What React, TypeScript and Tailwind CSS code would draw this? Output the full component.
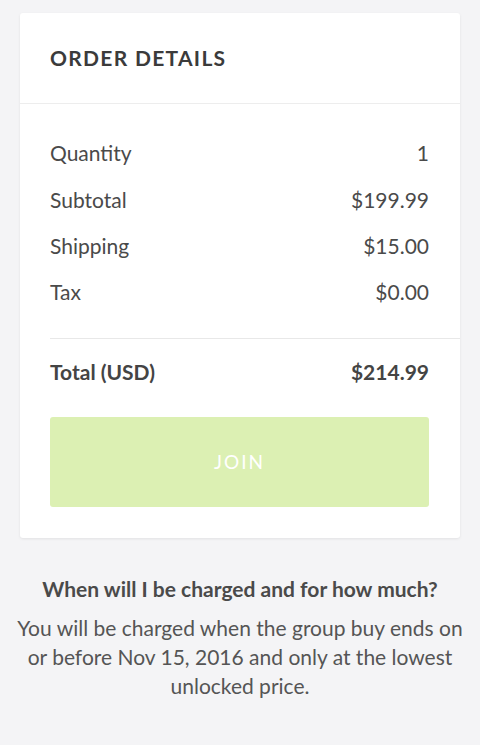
export default function App() {
  const rows = [
    ["Quantity", "1"],
    ["Subtotal", "$199.99"],
    ["Shipping", "$15.00"],
    ["Tax", "$0.00"],
  ];
  return (
    <div className="min-h-[745px] w-[480px] bg-[#f4f4f6] pt-[13px] text-[#4a4a4a]" style={{ fontFamily: "Lato, 'Open Sans', sans-serif" }}>
      <div className="mx-[20px] rounded-[3px] bg-white shadow-[0_1px_3px_rgba(0,0,0,0.08)]">
        <div className="flex h-[91px] items-center border-b border-[#ededed] px-[30px]">
          <h2 className="text-[21px] font-bold tracking-[1.3px] text-[#3b3b3b]">ORDER DETAILS</h2>
        </div>
        <div className="pt-[26px]">
          {rows.map(([k, v]) => (
            <div key={k} className="ml-[30px] mr-[31px] flex h-[46.3px] items-center justify-between text-[21px]">
              <span>{k}</span>
              <span>{v}</span>
            </div>
          ))}
          <div className="mt-[23px] ml-[30px] border-t border-[#e8e8e8]" />
          <div className="ml-[30px] mr-[31px] mt-[10px] flex h-[46px] items-center justify-between text-[21px] font-bold text-[#444]">
            <span>Total (USD)</span>
            <span>$214.99</span>
          </div>
          <div className="ml-[30px] mr-[31px] mt-[22px] flex h-[90px] items-center justify-center rounded-[3px] bg-[#dcf0b3] text-[19px] tracking-[2px] text-white">
            JOIN
          </div>
          <div className="h-[31px]" />
        </div>
      </div>
      <div className="mt-[36px] px-[16px] text-center">
        <h3 className="text-[21px] font-bold leading-[29px] text-[#4a4a4a]">When will I be charged and for how much?</h3>
        <p className="mt-[10px] text-[21px] leading-[29px] text-[#555]">
          You will be charged when the group buy ends on or before Nov 15, 2016 and only at the lowest unlocked price.
        </p>
      </div>
    </div>
  );
}
